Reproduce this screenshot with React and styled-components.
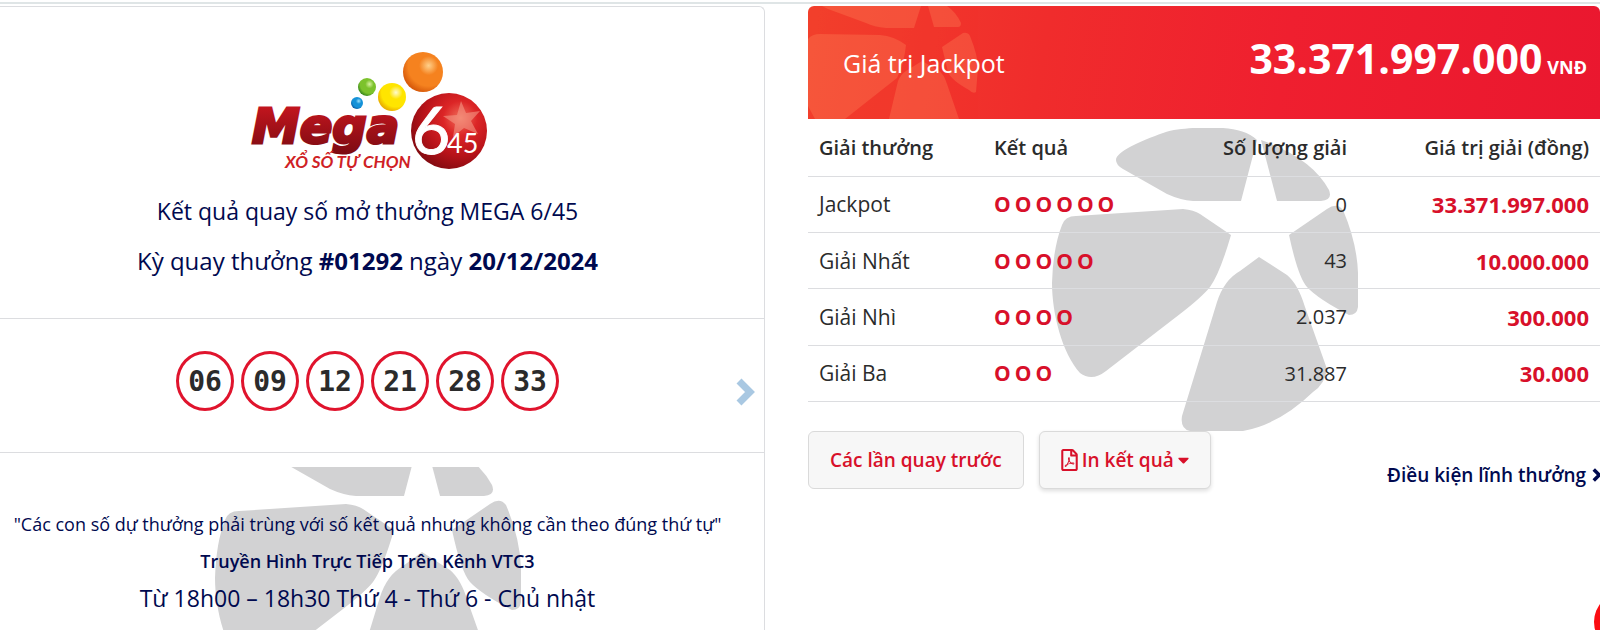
import React from "react";
import styled, { createGlobalStyle, css } from "styled-components";
import { FaRegFilePdf, FaCaretDown } from "react-icons/fa";

const sans = `"Open Sans", "Noto Sans", sans-serif`;
const navy = "#00094f";
const red = "#d8102a";
const line = "#dcdde0";

const GlobalStyle = createGlobalStyle`
  * { box-sizing: border-box; }
  html { overflow: hidden; }
  body { margin: 0; background: #fff; color: #2b2b2b; font-family: ${sans}; font-size: 20px; }
`;

const Page = styled.div`
  position: relative;
  min-height: 100vh;
  border-top: 2px solid #fff;
`;
const TopRule = styled.div`
  height: 2px;
  background: #dfe5e6;
  margin-bottom: 2px;
`;
const Columns = styled.main`
  display: grid;
  grid-template-columns: 765fr 792fr;
  column-gap: 43px;
`;
const DrawCard = styled.section`
  border: 1px solid ${line};
  border-left: 0;
  border-bottom: 0;
  border-top-right-radius: 6px;
  color: ${navy};
  min-height: calc(100vh - 6px);
`;
const cell = css`
  display: flex;
  flex-direction: column;
  align-items: center;
  padding-right: 29px;
  text-align: center;
`;
const Summary = styled.header`
  ${cell}
  height: 312px;
  padding-top: 42px;
  border-bottom: 1px solid ${line};
`;
const Logo = styled.svg`
  width: 240px;
  height: 124px;
`;
const Title = styled.h1`
  margin: 20px 0 0;
  font-size: 23px;
  line-height: 36px;
  font-weight: 400;
`;
const DrawInfo = styled.p`
  margin: 14px 0 0;
  font-size: 24px;
  line-height: 36px;
`;
const Balls = styled.div`
  position: relative;
  height: 134px;
  padding: 32px 29px 0 0;
  border-bottom: 1px solid ${line};
`;
const BallList = styled.ol`
  display: flex;
  justify-content: center;
  gap: 7px;
  margin: 0;
  padding: 0;
  list-style: none;
`;
const Ball = styled.li`
  width: 58px;
  height: 60px;
  border: 3px solid #e0142d;
  border-radius: 50%;
  display: grid;
  place-items: center;
  padding-top: 2px;
  color: #2b2b2b;
  font: 700 28px/34px "DejaVu Sans Mono", monospace;
`;
const NextButton = styled.button`
  position: absolute;
  right: 9px;
  top: 59px;
  padding: 0;
  border: 0;
  background: none;
  color: #a9c8e2;
  display: flex;
`;
const Notes = styled.div`
  ${cell}
  position: relative;
  overflow: hidden;
  margin-top: 14px;
  min-height: 163px;
  padding-top: 39px;
`;
const Note = styled.p`
  position: relative;
  margin: 0;
  font-size: ${(p) => p.$size}px;
  line-height: 37px;
  font-weight: ${(p) => (p.$bold ? 600 : 400)};
  white-space: nowrap;
`;
const Mark = styled.svg`
  position: absolute;
  left: 50%;
  top: ${(p) => p.$top}px;
  width: 307px;
  height: 303px;
  margin-left: ${(p) => p.$shift}px;
`;
const Banner = styled.header`
  position: relative;
  overflow: hidden;
  display: flex;
  align-items: center;
  justify-content: space-between;
  height: 113px;
  padding: 0 13px 0 35px;
  border-radius: 6px 6px 0 0;
  color: #fff;
  background: linear-gradient(100deg, #f2402c 0%, #f02c2c 30%, #ef1f2f 60%, #ea172f 100%);
`;
const BannerMark = styled.svg`
  position: absolute;
  left: 0;
  top: 0;
  width: 170px;
  height: 113px;
`;
const BannerLabel = styled.h2`
  position: relative;
  margin: 0;
  font-size: 25px;
  font-weight: 400;
`;
const Amount = styled.p`
  margin: 0;
  font-size: 41px;
  line-height: 50px;
  font-weight: 700;
`;
const Unit = styled.span`
  margin-left: 5px;
  font-size: 18px;
`;
const TableArea = styled.div`
  position: relative;
  overflow: hidden;
  padding-bottom: 29px;
`;
const Table = styled.table`
  position: relative;
  width: 100%;
  height: 283px;
  border-collapse: collapse;
  table-layout: fixed;
`;
const Col = styled.col`
  width: ${(p) => p.$w}px;
`;
const Th = styled.th`
  height: 57px;
  padding: 0 11px;
  border-bottom: 1px solid ${line};
  text-align: ${(p) => (p.$end ? "right" : "left")};
  font-size: 20px;
  font-weight: 600;
  white-space: nowrap;
`;
const Td = styled.td`
  height: 56px;
  padding: 0 11px;
  border-bottom: 1px solid ${line};
  text-align: ${(p) => (p.$end ? "right" : "left")};
  font-size: ${(p) => p.$size || 21}px;
  font-weight: ${(p) => (p.$strong ? 700 : 400)};
  color: ${(p) => (p.$strong ? red : "inherit")};
`;
const Marks = styled.span`
  display: flex;
  gap: 4px;
`;
const Actions = styled.div`
  display: flex;
  align-items: flex-start;
`;
const Button = styled.button`
  display: flex;
  align-items: center;
  gap: 4px;
  height: 58px;
  margin-right: 15px;
  padding: 0 21px;
  border: 1px solid #dadada;
  border-radius: 6px;
  background: #f7f7f7;
  box-shadow: ${(p) => (p.$raised ? "0 2px 4px #0002" : "none")};
  color: ${red};
  font: 600 19px ${sans};
  white-space: nowrap;
`;
const PdfIcon = styled(FaRegFilePdf)`
  width: 17px;
  height: 22px;
`;
const CaretIcon = styled(FaCaretDown)`
  width: 11px;
  height: 18px;
`;
const TermsLink = styled.a`
  display: flex;
  align-items: center;
  gap: 6px;
  margin: 26px -2px 0 auto;
  color: ${navy};
  font-size: 19px;
  line-height: 36px;
  font-weight: 600;
  text-decoration: none;
  white-space: nowrap;
`;
const Chat = styled.button`
  position: fixed;
  right: -54px;
  bottom: -22px;
  width: 60px;
  height: 60px;
  border: 0;
  border-radius: 50%;
  background: #fb0d12;
`;

const petals = [
  "M64 32C64 24 88 13 111 5C121 1 130 1 141 0H171C185 1 197 4 205 12L189 73H141Q128 72 115 66L71 41Q64 37 64 32Z",
  "M209 12Q260 30 277 62Q281 72 269 73H225Z",
  "M24 88L131 81Q142 82 148 86L179 107Q168 145 158 159Q150 169 128 186L54 243Q40 254 28 245C10 225 0 185 0 155Q1 120 10 97Q13 88 24 88Z",
  "M237 107L275 81Q285 74 291 82Q305 115 306 145V179Q305 187 297 187Q266 171 255 159Q246 149 237 107Z",
  "M207 129L235 147Q246 156 253 179L275 241Q273 256 261 264Q228 296 191 303H138Q128 301 130 288L165 174Q172 152 188 143Z",
];
const bannerPetals = [
  "M14 0H113L106 22H78Q66 21 58 17L20 3Z",
  "M120 0H139Q148 6 153 17Q153 21 150 21H126Z",
  "M0 33Q4 28 12 28L72 29Q86 30 98 39Q96 58 89 72L37 113H7L0 100Z",
  "M134 41L155 27Q160 26 162 30Q170 50 170 62L168 86Q165 88 161 84Q143 74 140 66Z",
  "M114 55L130 64Q136 68 139 78L151 113H81L90 75Q93 68 98 65Z",
];

const Watermark = ({ top, shift }) => (
  <Mark $top={top} $shift={shift} viewBox="0 0 307 303" fill="#d2d2d3" aria-hidden="true">
    {petals.map((d) => <path key={d} d={d} />)}
  </Mark>
);

const Chevron = ({ height }) => (
  <svg width={Math.round(height * 0.68)} height={height} viewBox="0 0 19 28" fill="none" stroke="currentColor" strokeWidth="7" aria-hidden="true">
    <path d="M3 3L14 14L3 25" />
  </svg>
);

const spheres = [
  ["orange", "#ffd08a", "#f5821f", "#d95c0c"],
  ["yellow", "#fffbd0", "#ffe500", "#eab000"],
  ["green", "#d8f2a0", "#7cc22c", "#3c8a1c"],
  ["blue", "#9be0fa", "#1592d8", "#0a62a8"],
];

const MegaLogo = () => (
  <Logo viewBox="248 49 240 124" role="img" aria-label="Mega 6/45">
    <defs>
      {spheres.map(([id, a, b, c]) => (
        <radialGradient key={id} id={id} cx=".64" cy=".34" r=".68">
          <stop offset="0" stopColor={a} />
          <stop offset=".35" stopColor={b} />
          <stop offset=".75" stopColor={b} />
          <stop offset="1" stopColor={c} />
        </radialGradient>
      ))}
      <radialGradient id="ruby" cx=".65" cy=".33" r=".75">
        <stop offset="0" stopColor="#f0705c" />
        <stop offset=".3" stopColor="#dc2526" />
        <stop offset=".65" stopColor="#b81319" />
        <stop offset="1" stopColor="#7d0a10" />
      </radialGradient>
      <linearGradient id="word" x1="0" y1="0" x2="0" y2="1">
        <stop offset="0" stopColor="#cf1720" />
        <stop offset="1" stopColor="#7c0b12" />
      </linearGradient>
    </defs>
    <circle cx="423" cy="72" r="20" fill="url(#orange)" />
    <circle cx="392" cy="97" r="14" fill="url(#yellow)" />
    <circle cx="367" cy="87" r="9" fill="url(#green)" />
    <circle cx="357" cy="103" r="6" fill="url(#blue)" />
    <circle cx="449" cy="131" r="38" fill="url(#ruby)" />
    <path d="M461 101l5 12 14-2-9 10 7 13-14-6-11 9 2-13-12-8 14-1z" fill="#f6a08c" opacity=".55" />
    <text x="252" y="143" fill="url(#word)" stroke="url(#word)" strokeWidth="3" fontFamily="DejaVu Sans, sans-serif" fontWeight="700" fontStyle="italic" fontSize="48">Mega</text>
    <text x="412" y="154" fill="#fff" fontFamily="Lato, sans-serif" fontWeight="400" stroke="#fff" strokeWidth="1" fontSize="66">6</text>
    <text x="447" y="153" fill="#fff" fontFamily="Lato, sans-serif" fontWeight="400" fontSize="27">45</text>
    <text x="285" y="168" fill="#cf1f26" fontFamily="Lato, sans-serif" fontWeight="700" fontStyle="italic" fontSize="17">XỔ SỐ TỰ CHỌN</text>
  </Logo>
);

const numbers = ["06", "09", "12", "21", "28", "33"];
const prizes = [
  ["Jackpot", 6, "0", "33.371.997.000"],
  ["Giải Nhất", 5, "43", "10.000.000"],
  ["Giải Nhì", 4, "2.037", "300.000"],
  ["Giải Ba", 3, "31.887", "30.000"],
];

export default function App() {
  return (
    <Page>
      <GlobalStyle />
      <TopRule />
      <Columns>
        <DrawCard>
          <Summary>
            <MegaLogo />
            <Title>Kết quả quay số mở thưởng MEGA 6/45</Title>
            <DrawInfo>Kỳ quay thưởng <b>#01292</b> ngày <b>20/12/2024</b></DrawInfo>
          </Summary>
          <Balls>
            <BallList>{numbers.map((n) => <Ball key={n}>{n}</Ball>)}</BallList>
            <NextButton aria-label="Kỳ sau"><Chevron height={28} /></NextButton>
          </Balls>
          <Notes>
            <Watermark top={-44} shift={-167} />
            <Note $size={18}>"Các con số dự thưởng phải trùng với số kết quả nhưng không cần theo đúng thứ tự"</Note>
            <Note $size={18} $bold>Truyền Hình Trực Tiếp Trên Kênh VTC3</Note>
            <Note $size={23}>Từ 18h00 – 18h30 Thứ 4 - Thứ 6 - Chủ nhật</Note>
          </Notes>
        </DrawCard>
        <section>
          <Banner>
            <BannerMark viewBox="0 0 170 113" fill="#ff8a5c" opacity=".3" aria-hidden="true">
              {bannerPetals.map((d) => <path key={d} d={d} />)}
            </BannerMark>
            <BannerLabel>Giá trị Jackpot</BannerLabel>
            <Amount>33.371.997.000<Unit>VNĐ</Unit></Amount>
          </Banner>
          <TableArea>
            <Watermark top={9} shift={-152} />
            <Table>
              <colgroup><Col $w={175} /><Col $w={160} /><Col $w={215} /><Col $w={242} /></colgroup>
              <thead>
                <tr><Th>Giải thưởng</Th><Th>Kết quả</Th><Th $end>Số lượng giải</Th><Th $end>Giá trị giải (đồng)</Th></tr>
              </thead>
              <tbody>
                {prizes.map(([name, hits, count, value]) => (
                  <tr key={name}>
                    <Td>{name}</Td>
                    <Td $strong><Marks>{Array.from({ length: hits }, (_, i) => <span key={i}>O</span>)}</Marks></Td>
                    <Td $end $size={20}>{count}</Td>
                    <Td $end $strong $size={22}>{value}</Td>
                  </tr>
                ))}
              </tbody>
            </Table>
          </TableArea>
          <Actions>
            <Button>Các lần quay trước</Button>
            <Button $raised><PdfIcon />In kết quả<CaretIcon /></Button>
            <TermsLink href="#terms">Điều kiện lĩnh thưởng<Chevron height={14} /></TermsLink>
          </Actions>
        </section>
      </Columns>
      <Chat aria-label="Chat" />
    </Page>
  );
}
